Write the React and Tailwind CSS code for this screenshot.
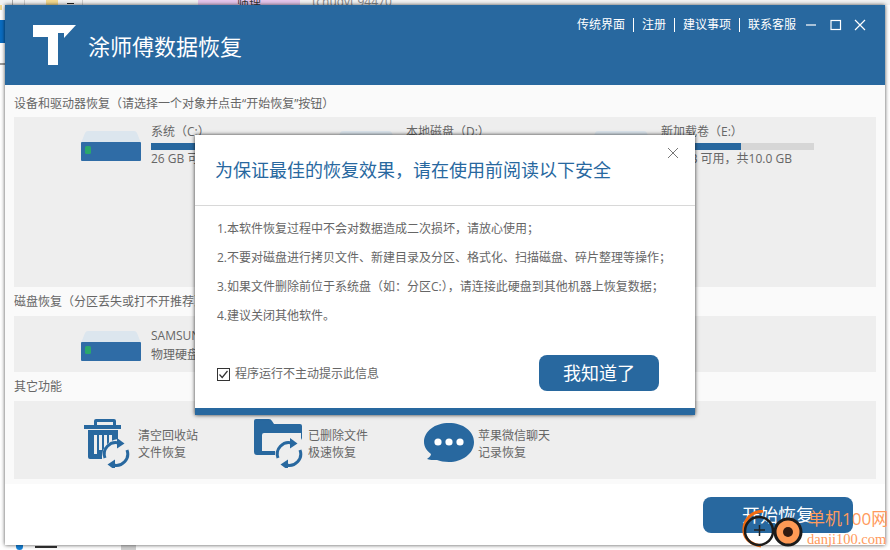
const font = { fontFamily: '"Open Sans","Noto Sans CJK SC",sans-serif' };

function Disk() {
  return (
    <svg width="60" height="32" viewBox="0 0 60 32" className="shrink-0">
      <path d="M0 13 L4 3 Q5 1 7 1 L53 1 Q55 1 56 3 L60 13 Z" fill="#dce6ee" />
      <path d="M0 13 Q0 12 1 12 L59 12 Q60 12 60 13 L60 30 Q60 31 59 31 L1 31 Q0 31 0 30 Z" fill="#2f6ca6" />
      <rect x="4" y="16" width="6" height="8" rx="1.5" fill="#2aa76c" />
    </svg>
  );
}

function Sync({ x, y }) {
  return (
    <g transform={`translate(${x} ${y})`} fill="none" stroke="#28689f" strokeWidth="3">
      <path d="M-11 4 A11.5 11.5 0 0 1 3 -11" />
      <path d="M11 -4 A11.5 11.5 0 0 1 -3 11" />
      <path d="M1 -16 L8.5 -10.5 L1 -5.5 Z" fill="#28689f" stroke="none" />
      <path d="M-1 16 L-8.5 10.5 L-1 5.5 Z" fill="#28689f" stroke="none" />
    </g>
  );
}

function TrashIcon() {
  return (
    <svg width="46" height="50" viewBox="0 0 46 50">
      <path d="M10 7 V3 Q10 1 12 1 H30 Q32 1 32 3 V7 H37 V11 H0 V7 Z M13 4 V7 H29 V4 Z" fill="#28689f" fillRule="evenodd" />
      <path d="M4 12 H34 V21 A18 18 0 0 0 18 41 H6 Q4 41 4 39 Z" fill="#28689f" />
      <path d="M10 17 H13 V36 H10 Z M15 17 H18 V32 H15 Z M20 17 H23 V27 L20 30 Z M25 17 H28 V23 L25 25 Z" fill="#eeeeee" />
      <Sync x="32" y="36" />
    </svg>
  );
}

function FolderIcon() {
  return (
    <svg width="50" height="50" viewBox="0 0 50 50">
      <path d="M2 1 H15 Q17 1 18 3 L20 6 H46 Q48 6 48 8 V20 L47 22 V15 H10 Q8 15 8 17 V33 H21 V37 H3 Q0 37 0 34 V3 Q0 1 2 1 Z" fill="#28689f" />
      <Sync x="35" y="36" />
    </svg>
  );
}

function ChatIcon() {
  return (
    <svg width="50" height="40" viewBox="0 0 50 40">
      <path d="M25 0 C39 0 50 8 50 19 C50 31 38 39 25 39 C20 39 16 38 13 37 C9 37 5 37 3 36 C6 34 7 32 7 31 C3 28 0 24 0 19 C0 8 11 0 25 0 Z" fill="#28689f" />
      <circle cx="14" cy="19" r="3.6" fill="#fff" />
      <circle cx="25" cy="19" r="3.6" fill="#fff" />
      <circle cx="36" cy="19" r="3.6" fill="#fff" />
    </svg>
  );
}

function Volume({ name, pct, info }) {
  return (
    <div className="flex w-[255px] items-start">
      <div className="w-[70px] pt-[13px]"><Disk /></div>
      <div className="w-[153px] text-xs leading-4 text-[#666]">
        <div className="mt-[7px] whitespace-nowrap">{name}</div>
        <div className="mt-[3px] h-[7px] bg-[#d6d6d6]"><div className="h-full bg-[#28689f]" style={{ width: pct }} /></div>
        <div className="mt-[1px] whitespace-nowrap">{info}</div>
      </div>
    </div>
  );
}

function Feature({ icon, a, b }) {
  return (
    <div className="flex h-full w-[170px] items-start pt-[17px]">
      <div className="flex h-[50px] w-[54px] items-center">{icon}</div>
      <div className="pt-[9px] text-xs leading-[17px] text-[#666]"><div>{a}</div><div>{b}</div></div>
    </div>
  );
}

export default function App() {
  return (
    <div className="relative h-[550px] w-[890px] overflow-hidden bg-white" style={font}>
      {/* desktop behind the window */}
      <div className="absolute inset-x-0 top-0 h-[5px] bg-[#f3f3f3]" />
      <div className="absolute left-[12px] top-0 h-[5px] w-px bg-[#aaa]" />
      <div className="absolute left-[24px] top-0 h-[5px] w-px bg-[#ccc]" />
      <div className="absolute left-[46px] top-0 h-[5px] w-[12px] bg-[#f5d98e]" />
      <div className="absolute left-[67px] top-[3px] h-px w-[7px] bg-[#222]" />
      <div className="absolute left-[82px] top-0 h-[5px] w-px bg-[#ccc]" />
      <div className="absolute left-[198px] top-0 flex h-[5px] w-[102px] justify-center overflow-hidden bg-[#e6c6ec] text-xs leading-[5px] text-[#333]">
        <span className="-mt-[5px] block leading-4">筛理</span>
      </div>
      <div className="absolute left-[312px] top-0 h-[5px] overflow-hidden text-xs text-[#888]">
        <span className="-mt-[6px] block leading-4">tchudvt 94470</span>
      </div>
      <div className="absolute left-0 top-[5px] h-[5px] w-[2px] bg-[#f5d98e]" />
      <div className="absolute left-0 top-[20px] h-[23px] w-[5px] bg-[#0a6cc0]" />
      <div className="absolute left-0 top-[63px] h-[2px] w-[5px] bg-[#999]" />
      <div className="absolute left-[16px] top-[545px] h-[5px] w-[7px] rounded-b-full bg-[#1582d8]" />
      <div className="absolute left-[35px] top-[546px] h-[2px] w-[22px] bg-[#333]" />
      <div className="absolute left-[121px] top-[545px] h-[5px] w-[15px] bg-[#cfcfcf]" />

      {/* window */}
      <div className="absolute left-[5px] top-[5px] flex h-[540px] w-[880px] flex-col bg-white shadow-[0_0_4px_rgba(0,0,0,0.7)]">
        <header className="relative flex h-[80px] shrink-0 bg-[#28689f] text-white">
          <svg width="44" height="41" viewBox="0 0 44 41" className="ml-[28px] mt-[20px]">
            <path d="M0 0 H43 L31 13 V8 H25 V40 H15 V12 H0 Z" fill="#fff" />
          </svg>
          <div className="ml-[11px] mt-[25px] text-[22px] leading-[32px]">涂师傅数据恢复</div>
          <div className="ml-auto mr-[19px] mt-[12px] flex h-[16px] items-start">
            <nav className="flex items-center text-xs leading-4">
              <span>传统界面</span>
              <i className="mx-[8px] h-[14px] w-px bg-white" />
              <span>注册</span>
              <i className="mx-[8px] h-[14px] w-px bg-white" />
              <span>建议事项</span>
              <i className="mx-[8px] h-[14px] w-px bg-white" />
              <span>联系客服</span>
            </nav>
            <svg width="60" height="14" viewBox="0 0 60 14" className="ml-[10px] mt-[1px]" fill="none" stroke="#fff" strokeWidth="1.2">
              <path d="M0 7 H10" />
              <rect x="25" y="2.5" width="9.5" height="9" />
              <path d="M49 2 L59 12 M59 2 L49 12" />
            </svg>
          </div>
        </header>

        <main className="h-[399px] bg-[#fafafa] px-[9px] text-xs text-[#666]">
          <div className="flex h-[32px] items-center pt-[6px] leading-4">设备和驱动器恢复（请选择一个对象并点击“开始恢复”按钮）</div>
          <section className="flex h-[170px] bg-[#eeeeee] pl-[67px]">
            <Volume name="系统（C:）" pct="60%" info="26 GB 可用" />
            <Volume name="本地磁盘（D:）" pct="40%" info="50 GB 可用" />
            <Volume name="新加载卷（E:）" pct="52%" info="4.3 GB 可用，共10.0 GB" />
          </section>
          <div className="flex h-[29px] items-center leading-4">磁盘恢复（分区丢失或打不开推荐）</div>
          <section className="flex h-[56px] items-center bg-[#eeeeee] pl-[67px]">
            <div className="w-[70px] pt-[3px]"><Disk /></div>
            <div className="pt-[2px] leading-[19px]"><div>SAMSUNG</div><div>物理硬盘</div></div>
          </section>
          <div className="flex h-[29px] items-center leading-4">其它功能</div>
          <section className="flex h-[78px] bg-[#eeeeee] pl-[70px]">
            <Feature icon={<TrashIcon />} a="清空回收站" b="文件恢复" />
            <Feature icon={<FolderIcon />} a="已删除文件" b="极速恢复" />
            <Feature icon={<ChatIcon />} a="苹果微信聊天" b="记录恢复" />
          </section>
        </main>

        <div className="flex flex-1 justify-end pr-[32px] pt-[13px]">
          <button className="h-[36px] w-[150px] rounded-lg bg-[#28689f] text-lg leading-none text-white">开始恢复</button>
        </div>
      </div>

      {/* dialog */}
      <div className="absolute left-[195px] top-[135px] flex h-[280px] w-[500px] flex-col bg-white shadow-[0_0_4px_rgba(0,0,0,0.8)]">
        <div className="relative flex h-[71px] shrink-0 items-center border-b border-[#d8d8d8] pl-[20px] text-lg text-[#28689f]">
          为保证最佳的恢复效果，请在使用前阅读以下安全
          <svg width="12" height="12" viewBox="0 0 12 12" className="absolute right-[16px] top-[12px]" stroke="#777" strokeWidth="1" fill="none">
            <path d="M1 1 L11 11 M11 1 L1 11" />
          </svg>
        </div>
        <div className="flex flex-col gap-[13px] pl-[22px] pt-[15px] text-xs leading-4 text-[#666]">
          <p>1.本软件恢复过程中不会对数据造成二次损坏，请放心使用；</p>
          <p>2.不要对磁盘进行拷贝文件、新建目录及分区、格式化、扫描磁盘、碎片整理等操作；</p>
          <p>3.如果文件删除前位于系统盘（如：分区C:），请连接此硬盘到其他机器上恢复数据；</p>
          <p>4.建议关闭其他软件。</p>
        </div>
        <div className="flex flex-1 items-start pl-[22px] pr-[36px] pt-[31px]">
          <div className="mt-[11px] flex items-center gap-[5px] text-xs leading-4 text-[#666]">
            <svg width="13" height="13" viewBox="0 0 13 13" className="shrink-0">
              <rect x="0.5" y="0.5" width="12" height="12" fill="#fff" stroke="#333" />
              <path d="M2.5 6.5 L5.2 9.5 L10.5 3" fill="none" stroke="#333" strokeWidth="1.2" />
            </svg>
            程序运行不主动提示此信息
          </div>
          <button className="ml-auto h-[36px] w-[120px] rounded-lg bg-[#28689f] text-lg leading-none text-white">我知道了</button>
        </div>
        <div className="h-[7px] shrink-0 bg-[#28689f]" />
      </div>

      {/* watermark */}
      <div className="absolute left-[741px] top-[510px]">
        <svg width="68" height="40" viewBox="0 0 68 40">
          <path d="M22 1 C8 2 2 12 3 22 C4 30 12 35 20 36" fill="none" stroke="#f26a10" strokeWidth="3" />
          <circle cx="18" cy="21" r="14" fill="none" stroke="#1c1c1c" strokeWidth="2.5" />
          <path d="M13 20 H24 M18.5 15 V26" stroke="#222" strokeWidth="1.5" />
          <circle cx="47" cy="22" r="13" fill="#ff9a55" stroke="#1c1c1c" strokeWidth="3" />
          <circle cx="47" cy="22" r="5" fill="#331a10" />
        </svg>
      </div>
      <div className="absolute left-[808px] top-[509px] whitespace-nowrap text-[17px] leading-5 text-[#ff9a5c]">单机100网</div>
      <div className="absolute left-[807px] top-[531px] whitespace-nowrap text-[14.5px] leading-4 text-[#ff9a5c]" style={{ fontFamily: '"Liberation Serif",serif' }}>danji100.com</div>
    </div>
  );
}
